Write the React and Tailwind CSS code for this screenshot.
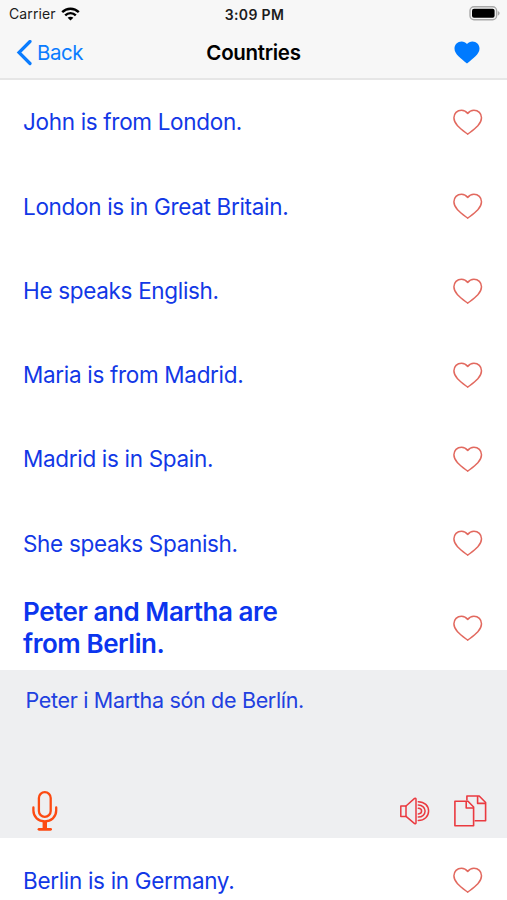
import { useState } from 'react'

const phrases = [
  { id: 1, text: 'John is from London.' },
  { id: 2, text: 'London is in Great Britain.' },
  { id: 3, text: 'He speaks English.' },
  { id: 4, text: 'Maria is from Madrid.' },
  { id: 5, text: 'Madrid is in Spain.' },
  { id: 6, text: 'She speaks Spanish.' },
  { id: 7, text: 'Peter and Martha are from Berlin.', translation: 'Peter i Martha són de Berlín.' },
  { id: 8, text: 'Berlin is in Germany.' },
]

function Heart() {
  return (
    <svg className="w-[30px] h-[26px]" viewBox="0 0 30 26" fill="none" stroke="#e2695f" strokeWidth="1.5" strokeLinejoin="round">
      <path d="M14.7 4.5C13.1 2.2 10.9 1.2 8.5 1.2C4.1 1.2 0.9 4.5 0.9 8.8C0.9 15.4 7.9 20 14.7 25.2C21.5 20 28.5 15.4 28.5 8.8C28.5 4.5 25.3 1.2 20.9 1.2C18.5 1.2 16.3 2.2 14.7 4.5Z" />
    </svg>
  )
}

function StatusBar() {
  return (
    <div className="h-[27px] grid grid-cols-3 items-center pl-[9px] pr-[7px] text-[14px] text-[#1c1c1c]">
      <div className="flex items-center gap-[5px]">
        <span className="text-[14px] tracking-[0.1px]">Carrier</span>
        <svg className="w-[19px] h-[14px]" viewBox="0 0 19 14" fill="none" stroke="#000" strokeWidth="2.4">
          <path d="M1.2 5.2C5.8 0.6 13.2 0.6 17.8 5.2" />
          <path d="M4.2 8.3C7.2 5.4 11.8 5.4 14.8 8.3" />
          <path d="M9.5 13.6L6.6 10.7C8.2 9.3 10.8 9.3 12.4 10.7Z" fill="#000" stroke="none" />
        </svg>
      </div>
      <span className="text-center font-semibold tracking-[0.35px] pt-px">3:09 PM</span>
      <svg className="w-[31px] h-[15px] justify-self-end" viewBox="0 0 31 15">
        <rect x="1" y="0.8" width="26.6" height="13" rx="4" fill="#f7f7f7" stroke="#a9a9a9" strokeWidth="1.4" />
        <rect x="3" y="2.8" width="22.6" height="9" rx="2" fill="#000" />
        <path d="M28.8 5V9.6C31.2 8.7 31.2 5.9 28.8 5Z" fill="#a9a9a9" />
      </svg>
    </div>
  )
}

function NavBar() {
  return (
    <div className="h-[51px] grid grid-cols-3 items-center pl-4 pr-[27px] pt-px">
      <button className="flex items-center gap-[5px] text-[#0a7cff] text-[20.5px]">
        <svg className="w-4 h-[26px]" viewBox="0 0 16 26" fill="none" stroke="currentColor" strokeWidth="3.2" strokeLinecap="round">
          <path d="M14 1.5L3 12.5L14 23.5" />
        </svg>
        <span className="tracking-[-0.5px]">Back</span>
      </button>
      <h1 className="text-center font-semibold text-[20.5px] text-black tracking-[-0.3px] pl-[11px]">Countries</h1>
      <svg className="w-[26px] h-[23px] mb-px justify-self-end" viewBox="0 0 26 23" fill="#007aff">
        <path d="M13 3C11.7 1.2 9.8 0.4 7.6 0.4C3.6 0.4 0.5 3.4 0.5 7.4C0.5 13.4 7 17 13 22.6C19 17 25.5 13.4 25.5 7.4C25.5 3.4 22.4 0.4 18.4 0.4C16.2 0.4 14.3 1.2 13 3Z" />
      </svg>
    </div>
  )
}

function Translation({ text }) {
  return (
    <div className="h-[168.5px] bg-[#eeeff1] flex flex-col justify-between pl-[25px] pr-[20px] pt-[15px] pb-[6px]">
      <p className="text-[21.5px] leading-[30px] text-[#2140e0] tracking-[-0.32px] pl-[0.5px]">{text}</p>
      <div className="flex items-center">
        <svg className="w-[28px] h-[42px] ml-[6px]" viewBox="0 0 28 42" fill="none" stroke="#fc4a12" strokeWidth="2.3" strokeLinecap="round">
          <rect x="7.9" y="2.2" width="11.8" height="24.6" rx="5.9" />
          <path d="M2.4 17.5V20.5C2.4 27 7.4 31.3 13.8 31.3S25.2 27 25.2 20.5V17.5" />
          <path d="M13.8 32V38" strokeWidth="4.4" strokeLinecap="butt" />
          <path d="M8 39.3H19.6" strokeWidth="2.8" />
        </svg>
        <svg className="w-[31px] h-[28px] ml-auto" viewBox="0 0 31 28" fill="none" stroke="#ea3a40" strokeWidth="1.5" strokeLinejoin="round" strokeLinecap="round">
          <path d="M1.8 9H7V19.4H1.8Z" />
          <path d="M7 9L15.6 1.4Q17 0.8 17 2.2V25.8Q17 27.2 15.6 26.6L7 19.4" />
          <path d="M19.3 4.7C25.5 4.7 29.6 8.8 29.6 14.1S25.5 23.5 19.3 23.5" />
          <path d="M19.3 8.1C23.3 8.1 26.1 10.7 26.1 14.1S23.3 20.1 19.3 20.1" />
          <path d="M19.3 11.3C21.3 11.3 22.6 12.5 22.6 14.1S21.3 16.9 19.3 16.9" />
        </svg>
        <svg className="w-[34px] h-[32px] ml-[23px]" viewBox="0 0 34 32" fill="none" stroke="#ea3a40" strokeWidth="1.6" strokeLinejoin="round">
          <path d="M1.9 6.3H15L20.6 12V30.7H1.9Z" />
          <path d="M13.2 6.3V13H20.6" />
          <path d="M13.9 5.5V1H26.2L32.6 7.5V25.7H21.6" />
          <path d="M24.6 1V8.4H32.6" />
        </svg>
      </div>
    </div>
  )
}

export default function App() {
  const [openId, setOpenId] = useState(7)

  return (
    <div className="h-[900px] overflow-hidden bg-white font-['Inter','Liberation_Sans',sans-serif]">
      <header className="h-[80px] bg-[#f7f7f7] border-b-2 border-[#e6e6e6]">
        <StatusBar />
        <NavBar />
      </header>
      <ul>
        {phrases.map(phrase => (
          <li key={phrase.id}>
            <div onClick={() => setOpenId(phrase.id)} className="h-[84.25px] flex items-center justify-between pl-[23px] pr-[24px]">
              {phrase.id === openId ? (
                <p className="w-[290px] text-[26px] leading-[32px] font-semibold text-[#0b35ee] tracking-[-0.44px]">{phrase.text}</p>
              ) : (
                <p className="text-[22.5px] text-[#1238e6] tracking-[-0.32px]">{phrase.text}</p>
              )}
              <Heart />
            </div>
            {phrase.id === openId && phrase.translation && <Translation text={phrase.translation} />}
          </li>
        ))}
      </ul>
    </div>
  )
}
